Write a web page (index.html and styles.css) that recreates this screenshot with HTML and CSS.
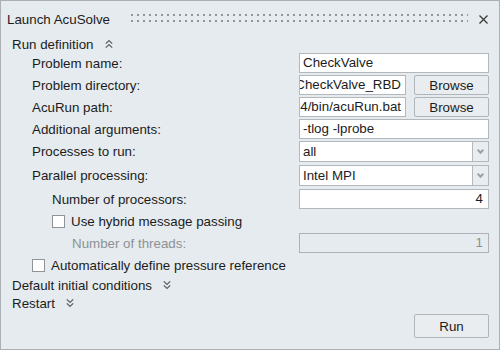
FILE: index.html
```html
<!DOCTYPE html>
<html lang="en">
<head>
  <meta charset="UTF-8">
  <title>Launch AcuSolve</title>
  <link rel="stylesheet" href="styles.css">
</head>
<body>
  <div class="dialog">
    <div class="titlebar">
      <span class="title">Launch AcuSolve</span>
      <span class="grip"></span>
      <svg class="close" width="9" height="9" viewBox="0 0 9 9">
        <path d="M0.5 0.5 L8.5 8.5 M8.5 0.5 L0.5 8.5" />
      </svg>
    </div>

    <div class="section-head section-top">
      Run definition
      <svg class="chevron" width="8" height="10" viewBox="0 0 8 10">
        <path d="M0.8 4.6 L4 1.6 L7.2 4.6 M0.8 8.6 L4 5.6 L7.2 8.6" />
      </svg>
    </div>

    <div class="form">
      <div class="row">
        <span class="label">Problem name:</span>
        <div class="field"><div class="input">CheckValve</div></div>
      </div>
      <div class="row">
        <span class="label">Problem directory:</span>
        <div class="field">
          <div class="input path"><span>D:/CheckValve_RBD</span></div>
          <button class="btn">Browse</button>
        </div>
      </div>
      <div class="row">
        <span class="label">AcuRun path:</span>
        <div class="field">
          <div class="input path"><span>win64/bin/acuRun.bat</span></div>
          <button class="btn">Browse</button>
        </div>
      </div>
      <div class="row">
        <span class="label">Additional arguments:</span>
        <div class="field"><div class="input">-tlog -lprobe</div></div>
      </div>
      <div class="row row-select">
        <span class="label">Processes to run:</span>
        <div class="field">
          <div class="select">
            <span class="select-text">all</span>
            <span class="select-arrow"></span>
          </div>
        </div>
      </div>
      <div class="row row-select">
        <span class="label">Parallel processing:</span>
        <div class="field">
          <div class="select">
            <span class="select-text">Intel MPI</span>
            <span class="select-arrow"></span>
          </div>
        </div>
      </div>
      <div class="row indent-1">
        <span class="label">Number of processors:</span>
        <div class="field"><div class="input number">4</div></div>
      </div>
      <div class="row indent-1">
        <label class="check"><span class="box"></span>Use hybrid message passing</label>
      </div>
      <div class="row indent-2 disabled">
        <span class="label">Number of threads:</span>
        <div class="field"><div class="input number">1</div></div>
      </div>
      <div class="row row-auto">
        <label class="check"><span class="box"></span>Automatically define pressure reference</label>
      </div>
    </div>

    <div class="section-head">
      Default initial conditions
      <svg class="chevron" width="8" height="10" viewBox="0 0 8 10">
        <path d="M0.8 1.4 L4 4.4 L7.2 1.4 M0.8 5.4 L4 8.4 L7.2 5.4" />
      </svg>
    </div>
    <div class="section-head">
      Restart
      <svg class="chevron" width="8" height="10" viewBox="0 0 8 10">
        <path d="M0.8 1.4 L4 4.4 L7.2 1.4 M0.8 5.4 L4 8.4 L7.2 5.4" />
      </svg>
    </div>

    <div class="footer">
      <button class="btn btn-run">Run</button>
    </div>
  </div>
</body>
</html>
```

FILE: styles.css
```css
body {
  margin: 0;
  font-family: "Liberation Sans", Arial, sans-serif;
  font-size: 13.33px;
  color: #1c1c1c;
}

.dialog {
  width: 500px;
  height: 350px;
  box-sizing: border-box;
  border: 1px solid #abb0b4;
  background: #e5ebee;
  display: flex;
  flex-direction: column;
  padding: 0 10px 0 11px;
}

.titlebar {
  height: 36px;
  display: flex;
  align-items: center;
  margin-left: -5px;
  margin-right: 1px;
}

.title {
  white-space: nowrap;
}

.grip {
  flex: 1;
  height: 8px;
  margin: 0 11px 2px 17px;
  background-image:
    linear-gradient(90deg, #e5ebee 4px, transparent 4px),
    linear-gradient(#9095a0 2px, transparent 2px);
  background-size: 6px 6px;
}

.close {
  fill: none;
  stroke: #3a3a3a;
  stroke-width: 1.3;
}

.section-head {
  height: 18px;
  display: flex;
  align-items: center;
  white-space: nowrap;
}

.section-top {
  height: 14px;
}

.chevron {
  margin-left: 11px;
  fill: none;
  stroke: #5c5f62;
  stroke-width: 1.3;
}

.form {
  display: flex;
  flex-direction: column;
  gap: 2px;
  margin-top: 2px;
  padding-left: 20px;
}

.row {
  height: 20px;
  display: flex;
  align-items: center;
}

.row-select {
  height: 22px;
  align-items: flex-start;
}

.row-select .label {
  line-height: 21px;
}

.row-auto {
  height: 21px;
}

.indent-1 {
  padding-left: 20px;
}

.indent-2 {
  padding-left: 40px;
}

.label {
  flex: 1;
  white-space: nowrap;
}

.field {
  width: 190px;
  display: flex;
  gap: 8px;
}

.input {
  flex: 1;
  height: 20px;
  box-sizing: border-box;
  border: 1px solid #b3b8bc;
  background: #fff;
  padding: 0 3px;
  line-height: 18px;
  white-space: nowrap;
  overflow: hidden;
}

.input.path {
  display: flex;
  justify-content: flex-end;
  padding-right: 4px;
}

.input.number {
  text-align: right;
  padding-right: 5px;
}

.disabled {
  color: #8e9194;
}

.disabled .input {
  background: #e5ebee;
  border-color: #adb2b6;
}

.btn {
  width: 75px;
  height: 20px;
  padding: 0;
  border: 1px solid #b0b5b9;
  border-radius: 2px;
  background: #e9edf0;
  font: inherit;
  color: #1c1c1c;
}

.select {
  flex: 1;
  height: 21px;
  display: flex;
}

.select-text {
  flex: 1;
  box-sizing: border-box;
  border: 1px solid #b3b8bc;
  background: #fff;
  padding: 0 3px;
  line-height: 19px;
}

.select-arrow {
  width: 16px;
  box-sizing: border-box;
  border: 1px solid #b3b8bc;
  border-left: none;
  background: #e9edf0;
  position: relative;
}

.select-arrow::after {
  content: "";
  position: absolute;
  left: 5px;
  top: 6px;
  width: 3px;
  height: 3px;
  border-right: 2px solid #9da1a6;
  border-bottom: 2px solid #9da1a6;
  transform: rotate(45deg);
}

.check {
  display: flex;
  align-items: center;
  gap: 6px;
  white-space: nowrap;
}

.box {
  width: 13px;
  height: 13px;
  box-sizing: border-box;
  border: 1px solid #8f9397;
  background: #fff;
}

.footer {
  margin-top: auto;
  display: flex;
  justify-content: flex-end;
  padding-bottom: 11px;
}

.btn-run {
  height: 24px;
}
```
